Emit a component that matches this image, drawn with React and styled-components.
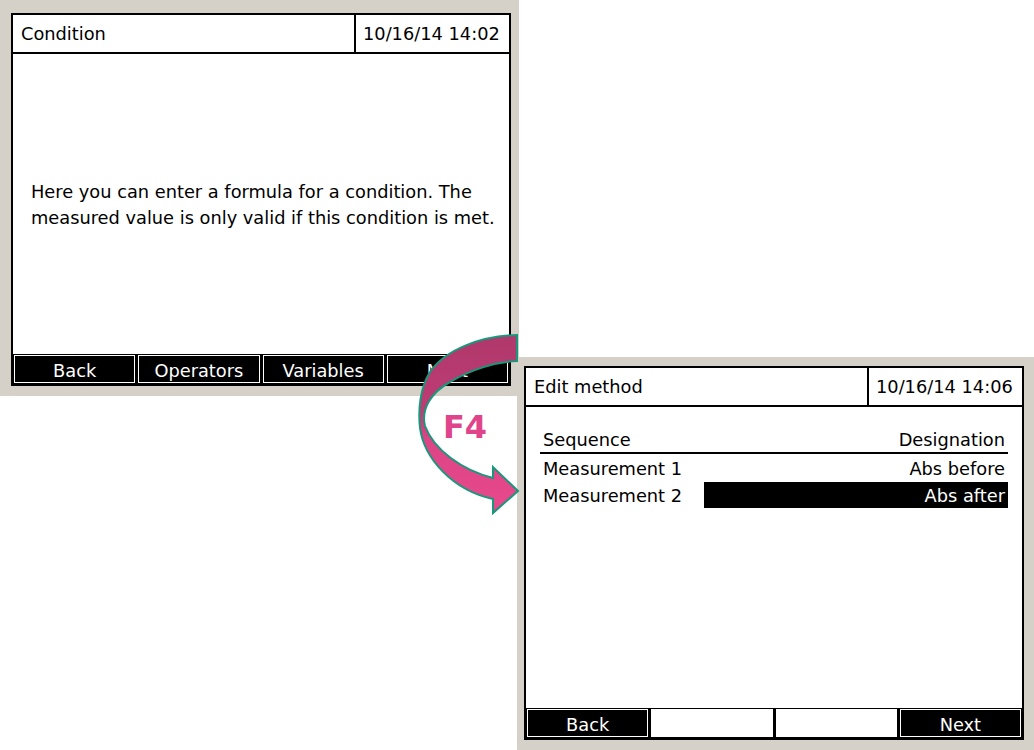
import styled, { createGlobalStyle } from "styled-components";

const GlobalStyle = createGlobalStyle`
  html, body {
    margin: 0;
    padding: 0;
    background: #ffffff;
  }
  body {
    font-family: "DejaVu Sans", "Liberation Sans", sans-serif;
  }
`;

const App = () => {
  return (
    <Page>
      <GlobalStyle />
      <FirstPanel>
        <Screen>
          <Header>
            <Title>Condition</Title>
            <Clock>10/16/14 14:02</Clock>
          </Header>
          <MessageBody>
            <p>Here you can enter a formula for a condition. The</p>
            <p>measured value is only valid if this condition is met.</p>
          </MessageBody>
          <SoftKeys>
            {FIRST_KEYS.map((label, index) => (
              <SoftKey key={index} active={!!label}>
                {label}
              </SoftKey>
            ))}
          </SoftKeys>
        </Screen>
      </FirstPanel>

      <SecondPanel>
        <Screen>
          <Header>
            <Title>Edit method</Title>
            <Clock>10/16/14 14:06</Clock>
          </Header>
          <TableBody>
            <Table>
              <HeadRow>
                <Cell>Sequence</Cell>
                <Cell right>Designation</Cell>
              </HeadRow>
              {ROWS.map((row, index) => (
                <Row key={index}>
                  <Cell>{row.sequence}</Cell>
                  <Cell right selected={row.selected}>
                    {row.designation}
                  </Cell>
                </Row>
              ))}
            </Table>
          </TableBody>
          <SoftKeys>
            {SECOND_KEYS.map((label, index) => (
              <SoftKey key={index} active={!!label}>
                {label}
              </SoftKey>
            ))}
          </SoftKeys>
        </Screen>
      </SecondPanel>

      <Arrow viewBox="410 325 120 200" aria-hidden="true">
        <defs>
          <linearGradient
            id="arrowFill"
            gradientUnits="userSpaceOnUse"
            x1="0"
            y1="335"
            x2="0"
            y2="513"
          >
            <stop offset="0" stopColor="#b0386b" />
            <stop offset="0.42" stopColor="#bd3c74" />
            <stop offset="0.58" stopColor="#dc4486" />
            <stop offset="1" stopColor="#e8498c" />
          </linearGradient>
        </defs>
        <path
          d="M517 335 C480 336 445 350 430 372 C420 388 418 410 420 428 C424 458 452 490 493 499 L493 513 L518 491 L493 467 L493 478 C462 470 434 450 425 426 C421 410 430 393 450 382 C470 370 495 362 517 361 Z"
          fill="url(#arrowFill)"
          stroke="#17987a"
          strokeWidth="2"
          strokeLinejoin="miter"
        />
      </Arrow>
      <KeyLabel>F4</KeyLabel>
    </Page>
  );
};

const Page = styled.div`
  position: relative;
  display: grid;
  grid-template-columns: 517px 2px 515px;
  grid-template-rows: 357px 39px 354px;
  width: 1034px;
  height: 750px;
  overflow: hidden;
  background: #ffffff;
`;

const Panel = styled.div`
  display: flex;
  background: #d5d1c9;
`;

const FirstPanel = styled(Panel)`
  grid-column: 1 / 3;
  grid-row: 1 / 3;
  padding: 13px 8px 10px 11px;
`;

const SecondPanel = styled(Panel)`
  grid-column: 2 / 4;
  grid-row: 2 / 4;
  padding: 9px 10px 10px 7px;
`;

const Screen = styled.div`
  flex: 1;
  display: flex;
  flex-direction: column;
  background: #ffffff;
  border: 2px solid #000000;
  color: #000000;
  font-size: 17.8px;
`;

const Header = styled.div`
  display: flex;
  height: 37px;
  border-bottom: 2px solid #000000;
`;

const Title = styled.div`
  flex: 1;
  display: flex;
  align-items: center;
  padding-left: 8px;
`;

const Clock = styled.div`
  display: flex;
  align-items: center;
  width: 146px;
  padding-left: 7px;
  border-left: 2px solid #000000;
`;

const MessageBody = styled.div`
  flex: 1;
  display: flex;
  flex-direction: column;
  justify-content: center;
  padding: 2px 0 0 18px;

  p {
    margin: 0;
    line-height: 26px;
  }
`;

const TableBody = styled.div`
  flex: 1;
  padding: 19px 14px 0 14px;
`;

const Table = styled.div`
  display: flex;
  flex-direction: column;
`;

const Row = styled.div`
  display: grid;
  grid-template-columns: 164px 1fr;
  height: 27px;
`;

const HeadRow = styled(Row)`
  height: 26px;
  border-bottom: 2px solid #000000;
  margin-bottom: 1px;
`;

const Cell = styled.div`
  display: flex;
  align-items: center;
  justify-content: ${(props) => (props.right ? "flex-end" : "flex-start")};
  padding: 0 3px;
  background: ${(props) => (props.selected ? "#000000" : "transparent")};
  color: ${(props) => (props.selected ? "#ffffff" : "#000000")};
  margin-bottom: ${(props) => (props.selected ? "1px" : "0")};
`;

const SoftKeys = styled.div`
  display: grid;
  grid-template-columns: repeat(4, 1fr);
  gap: 3px;
  height: 28px;
  padding: 1px;
  background: #000000;
`;

const SoftKey = styled.div`
  display: flex;
  align-items: center;
  justify-content: center;
  background: ${(props) => (props.active ? "#000000" : "#ffffff")};
  box-shadow: ${(props) => (props.active ? "inset 0 0 0 1px #ffffff" : "none")};
  color: #ffffff;
  padding-top: 3px;
`;

const Arrow = styled.svg`
  position: absolute;
  left: 410px;
  top: 325px;
  width: 120px;
  height: 200px;
  pointer-events: none;
`;

const KeyLabel = styled.span`
  position: absolute;
  left: 443px;
  top: 408px;
  font-family: "DejaVu Sans", sans-serif;
  font-weight: bold;
  font-size: 32px;
  line-height: 38px;
  color: #e0448a;
`;

const FIRST_KEYS = ["Back", "Operators", "Variables", "Next"];

const SECOND_KEYS = ["Back", "", "", "Next"];

const ROWS = [
  { sequence: "Measurement 1", designation: "Abs before" },
  { sequence: "Measurement 2", designation: "Abs after", selected: true },
];

export default App;
